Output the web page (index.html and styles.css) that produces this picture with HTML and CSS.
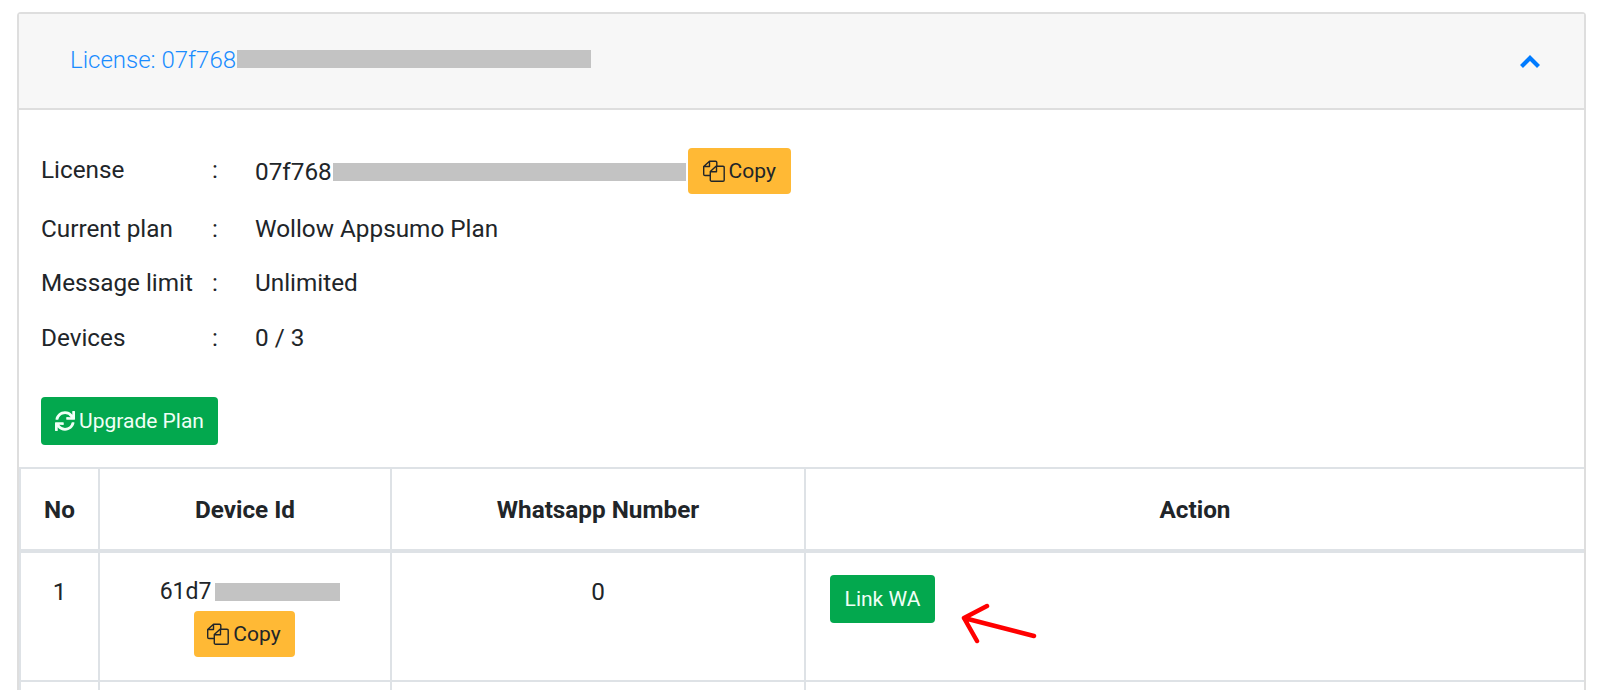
FILE: index.html
```html
<!DOCTYPE html>
<html lang="en">
<head>
    <meta charset="UTF-8">
    <title>License</title>
    <link rel="stylesheet" href="styles.css">
</head>
<body>
    <svg width="0" height="0" class="icon-defs">
        <symbol id="icon-copy" viewBox="0 0 22 22">
            <path d="M7 15.5H2a1.3 1.3 0 0 1-1.3-1.3V6.5L6.5 1.2h6a1.3 1.3 0 0 1 1.3 1.3V6M6.5 1.2V6.5H1" fill="none" stroke="currentColor" stroke-width="1.4" stroke-linejoin="round"/>
            <path d="M13 6.2h7a1.2 1.2 0 0 1 1.2 1.2V20a1.2 1.2 0 0 1-1.2 1.2H8.5A1.2 1.2 0 0 1 7.3 20V11.5zM13.5 6.2v5.5H7.5" fill="none" stroke="currentColor" stroke-width="1.4" stroke-linejoin="round"/>
        </symbol>
    </svg>

    <div class="card">
        <div class="card-header">
            <div class="license-title">License: 07f768<span class="redacted redacted-header"></span></div>
            <svg class="chevron" viewBox="0 0 22 14"><path d="M2.5 11.5L11 3l8.5 8.5" fill="none" stroke="currentColor" stroke-width="4.2"/></svg>
        </div>

        <div class="card-body">
            <div class="info">
                <div class="info-row info-row-first">
                    <div class="info-label info-label-first">License</div>
                    <div class="info-sep info-label-first">:</div>
                    <div class="info-value">07f768<span class="redacted redacted-license"></span><button class="btn btn-copy btn-copy-license"><svg class="copy-icon"><use href="#icon-copy"/></svg>Copy</button></div>
                </div>
                <div class="info-row">
                    <div class="info-label">Current plan</div>
                    <div class="info-sep">:</div>
                    <div class="info-value">Wollow Appsumo Plan</div>
                </div>
                <div class="info-row">
                    <div class="info-label">Message limit</div>
                    <div class="info-sep">:</div>
                    <div class="info-value">Unlimited</div>
                </div>
                <div class="info-row info-row-last">
                    <div class="info-label">Devices</div>
                    <div class="info-sep">:</div>
                    <div class="info-value">0 / 3</div>
                </div>
            </div>
            <button class="btn btn-green btn-upgrade">
                <svg class="sync-icon" viewBox="0 0 512 512"><path fill="currentColor" d="M440.65 12.57l4 82.77A247.16 247.16 0 0 0 255.83 8C134.73 8 33.91 94.92 12.29 209.82A12 12 0 0 0 24.09 224h49.05a12 12 0 0 0 11.67-9.26 175.91 175.91 0 0 1 317-56.94l-101.46-4.86a12 12 0 0 0-12.57 12v47.41a12 12 0 0 0 12 12H500a12 12 0 0 0 12-12V12a12 12 0 0 0-12-12h-47.37a12 12 0 0 0-11.98 12.57zM255.83 432a175.61 175.61 0 0 1-146-77.8l101.8 4.87a12 12 0 0 0 12.57-12v-47.4a12 12 0 0 0-12-12H12a12 12 0 0 0-12 12V500a12 12 0 0 0 12 12h47.35a12 12 0 0 0 12-12.6l-4.15-82.57A247.17 247.17 0 0 0 255.83 504c121.11 0 221.93-86.92 243.55-201.82a12 12 0 0 0-11.8-14.18h-49.05a12 12 0 0 0-11.67 9.26A175.86 175.86 0 0 1 255.83 432z"/></svg>Upgrade Plan
            </button>
        </div>

        <table class="devices">
            <colgroup>
                <col class="col-no">
                <col class="col-device">
                <col class="col-number">
                <col>
            </colgroup>
            <thead>
                <tr>
                    <th>No</th>
                    <th>Device Id</th>
                    <th>Whatsapp Number</th>
                    <th>Action</th>
                </tr>
            </thead>
            <tbody>
                <tr class="device-row">
                    <td>1</td>
                    <td>
                        <div class="device-id">61d7<span class="redacted redacted-device"></span></div>
                        <button class="btn btn-copy btn-copy-device"><svg class="copy-icon"><use href="#icon-copy"/></svg>Copy</button>
                    </td>
                    <td>0</td>
                    <td class="cell-action"><button class="btn btn-green btn-link">Link WA</button></td>
                </tr>
                <tr class="device-row-empty">
                    <td></td>
                    <td></td>
                    <td></td>
                    <td></td>
                </tr>
            </tbody>
        </table>
    </div>

    <!-- red annotation drawn over the screenshot -->
    <svg class="arrow" width="90" height="50" viewBox="0 0 90 50">
        <path d="M78 34L8 16M31 4L8 16L21 39" fill="none" stroke="#ff0000" stroke-width="4.5" stroke-linecap="round" stroke-linejoin="round"/>
    </svg>
</body>
</html>
```

FILE: styles.css
```css
* {
    margin: 0;
    padding: 0;
    box-sizing: border-box;
    font-family: Roboto, 'Liberation Sans', sans-serif;
}

html, body {
    height: 691px;
    overflow: hidden;
}

body {
    background: white;
    color: #212529;
    font-size: 24.3px;
    padding: 12px 14px 0 17px;
}

.icon-defs {
    display: block;
    height: 0;
}

.card {
    border: 2px solid #dedede;
    border-bottom: none;
    border-radius: 4px 4px 0 0;
}

.card-header {
    height: 96px;
    background: #f7f7f7;
    border-bottom: 2px solid #dedede;
    display: flex;
    justify-content: space-between;
    padding: 0 43px 0 51px;
}

.license-title {
    color: #1a8cff;
    font-size: 24px;
    font-weight: 300;
    margin-top: 32px;
    line-height: 28px;
    height: 28px;
    display: flex;
    align-items: center;
}

.chevron {
    width: 22px;
    height: 14px;
    color: #007bff;
    margin-top: 41px;
}

.redacted {
    display: inline-block;
    height: 18px;
    background: #c3c3c3;
    margin-left: 1px;
}

.license-title .redacted { margin-top: -2px; }

.redacted-header { width: 354px; }
.redacted-license { width: 353px; }
.redacted-device { width: 125px; margin-left: 4px; }

.card-body {
    padding: 40px 22px 22px;
}

.info {
    display: flex;
    flex-direction: column;
    gap: 20px;
}

.info-row {
    display: flex;
    align-items: center;
    height: 34px;
}

.info-row-first {
    height: 43px;
    margin-bottom: -2px;
}

.info-row-last {
    margin-top: 1px;
}

.info-label {
    width: 171px;
}

.info-label-first {
    margin-bottom: 5px;
}

.info-sep {
    width: 43px;
}

.info-value {
    display: flex;
    align-items: center;
}

.btn {
    border: none;
    border-radius: 4px;
    font-size: 21px;
    display: inline-flex;
    align-items: center;
    justify-content: center;
    cursor: pointer;
}

.btn-copy {
    background: #ffb935;
    color: #212529;
    height: 46px;
    width: 103px;
}

.btn-copy-license {
    margin: -2px 0 0 2px;
}

.btn-copy-device {
    width: 101px;
    margin-right: 2px;
}

.btn-green {
    background: #03a84e;
    color: #f0fff6;
    height: 48px;
}

.btn-upgrade {
    width: 177px;
    margin-top: 43px;
    display: flex;
}

.btn-link {
    width: 105px;
}

.copy-icon {
    width: 22px;
    height: 22px;
    margin-right: 4px;
}

.sync-icon {
    width: 20px;
    height: 20px;
    margin-right: 4px;
}

.devices {
    width: 100%;
    table-layout: fixed;
    border-collapse: collapse;
}

.col-no { width: 79px; }
.col-device { width: 292px; }
.col-number { width: 414px; }

th, td {
    border: 2px solid #dee2e6;
    text-align: center;
    vertical-align: top;
}

th {
    height: 83px;
    vertical-align: middle;
    font-weight: 700;
    border-bottom-width: 4px;
}

tr th:first-child, tr td:first-child {
    border-left-width: 2px;
}

tr th:last-child, tr td:last-child {
    border-right: none;
}

.device-row td {
    height: 130px;
    padding-top: 22px;
    line-height: 34px;
}

.device-row-empty td {
    height: 9px;
    border-bottom: none;
}

.device-id {
    display: flex;
    align-items: center;
    justify-content: center;
    height: 34px;
    margin-bottom: 2px;
    padding-left: 10px;
    font-size: 23px;
}

.cell-action {
    text-align: left;
    padding-left: 24px;
}

.arrow {
    position: absolute;
    left: 956px;
    top: 602px;
}
```
